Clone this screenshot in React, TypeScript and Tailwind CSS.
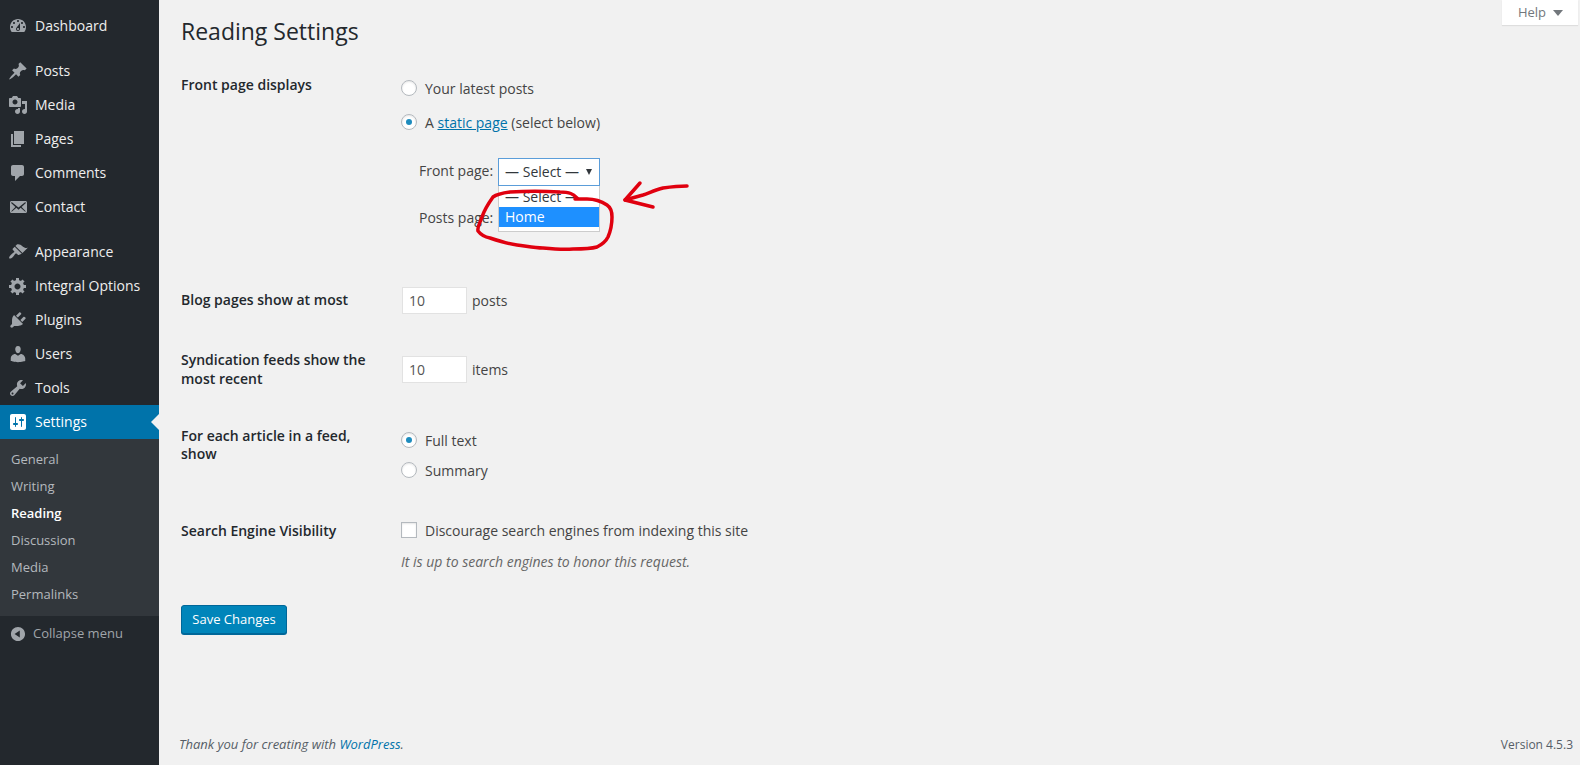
import type { ReactNode } from 'react';

const icons: Record<string, string> = {
  dashboard:
    'M3.76 16h12.48c1.1-1.37 1.76-3.11 1.76-5 0-4.42-3.58-8-8-8s-8 3.58-8 8c0 1.89.66 3.63 1.76 5zM10 4c.55 0 1 .45 1 1s-.45 1-1 1-1-.45-1-1 .45-1 1-1zM6 6c.55 0 1 .45 1 1s-.45 1-1 1-1-.45-1-1 .45-1 1-1zm8 0c.55 0 1 .45 1 1s-.45 1-1 1-1-.45-1-1 .45-1 1-1zm-5.37 5.55L12 7v6c0 1.1-.9 2-2 2s-2-.9-2-2c0-.57.24-1.08.63-1.45zM4 10c.55 0 1 .45 1 1s-.45 1-1 1-1-.45-1-1 .45-1 1-1zm12 0c.55 0 1 .45 1 1s-.45 1-1 1-1-.45-1-1 .45-1 1-1zm-5 3c0-.55-.45-1-1-1s-1 .45-1 1 .45 1 1 1 1-.45 1-1z',
  posts:
    'M10.44 3.02l1.82-1.82 6.36 6.35-1.83 1.82c-1.05-.68-2.48-.57-3.41.36l-.75.75c-.92.93-1.04 2.35-.35 3.41l-1.83 1.82-2.41-2.41-2.8 2.79c-.42.42-3.38 2.71-3.8 2.29s1.86-3.39 2.28-3.81l2.79-2.79L4.1 9.36l1.83-1.82c1.05.69 2.48.57 3.41-.36l.75-.75c.93-.92 1.04-2.35.35-3.41z',
  media:
    'M13 11V4c0-.55-.45-1-1-1h-1.67L9 1H5L3.67 3H2c-.55 0-1 .45-1 1v7c0 .55.45 1 1 1h10c.55 0 1-.45 1-1zM7 4.5c1.38 0 2.5 1.12 2.5 2.5S8.38 9.5 7 9.5 4.5 8.38 4.5 7 5.62 4.5 7 4.5zM14 6h5v10.5c0 1.38-1.12 2.5-2.5 2.5S14 17.88 14 16.5s1.12-2.5 2.5-2.5c.17 0 .34.02.5.05V9h-3V6zm-4 8.05V13h2v3.5c0 1.38-1.12 2.5-2.5 2.5S7 17.88 7 16.5 8.12 14 9.5 14c.17 0 .34.02.5.05z',
  pages: 'M6 15V2h10v13H6zm-1 1h8v2H3V5h2v11z',
  comments: 'M5 2h9c1.1 0 2 .9 2 2v7c0 1.1-.9 2-2 2h-2l-5 5v-5H5c-1.1 0-2-.9-2-2V4c0-1.1.9-2 2-2z',
  contact:
    'M19 14.5v-9c0-.83-.67-1.5-1.5-1.5H3.49c-.83 0-1.5.67-1.5 1.5v9c0 .83.67 1.5 1.5 1.5H17.5c.83 0 1.5-.67 1.5-1.5zm-1.31-9.11c.33.33.15.67-.03.84L13.6 9.95l3.9 4.06c.12.14.2.36.06.51-.13.16-.43.15-.56.05l-4.37-3.73-2.14 1.95-2.13-1.95-4.37 3.73c-.13.1-.43.11-.56-.05-.14-.15-.06-.37.06-.51l3.9-4.06-4.06-3.72c-.18-.17-.36-.51-.03-.84s.67-.17.95.07l6.24 5.04 6.25-5.04c.28-.24.62-.4.95-.07z',
  appearance:
    'M14.48 11.06L7.41 3.99l1.5-1.5c.5-.56 2.3-.47 3.51.32 1.21.8 1.43 1.28 2.91 2.1 1.18.64 2.45 1.26 4.45.85zm-.71.71L6.7 4.7 4.93 6.47c-.39.39-.39 1.02 0 1.41l1.06 1.06c.39.39.39 1.03 0 1.42-.6.6-1.43 1.11-2.21 1.69-.35.26-.7.53-1.01.84-1.38 1.38-2.02 2.9-1.42 3.5.6.6 2.12-.04 3.5-1.42.31-.31.58-.66.84-1.01.58-.78 1.09-1.61 1.69-2.21.39-.39 1.03-.39 1.42 0l1.06 1.06c.39.39 1.02.39 1.41 0z',
  gear:
    'M18 12h-2.18c-.17.7-.44 1.35-.81 1.93l1.54 1.54-2.1 2.1-1.54-1.54c-.58.36-1.23.63-1.91.79V19H8v-2.18c-.68-.16-1.33-.43-1.91-.79l-1.54 1.54-2.12-2.12 1.54-1.54c-.36-.58-.63-1.23-.79-1.91H1V9.03h2.17c.16-.7.44-1.35.8-1.94L2.43 5.55l2.1-2.1 1.54 1.54c.58-.37 1.24-.64 1.93-.81V2h3v2.18c.68.16 1.33.43 1.91.79l1.54-1.54 2.12 2.12-1.54 1.54c.36.59.64 1.24.8 1.94H18V12zm-8.5 1.5c1.66 0 3-1.34 3-3s-1.34-3-3-3-3 1.34-3 3 1.34 3 3 3z',
  plugins:
    'M13.11 4.36L9.87 7.6 8 5.73l3.24-3.24c.35-.34 1.05-.2 1.56.32.52.51.66 1.21.31 1.55zm-8 1.77l.91-1.12 9.01 9.01-1.19.84c-.71.71-2.63 1.16-3.82 1.16H6.14L4.9 17.26c-.59.59-1.54.59-2.12 0-.59-.58-.59-1.53 0-2.12l1.24-1.24v-3.88c0-1.13.4-3.19 1.09-3.89zm7.26 3.97l3.24-3.24c.34-.35 1.04-.21 1.55.31.52.51.66 1.21.31 1.55l-3.24 3.25z',
  users:
    'M10 9.25c-2.27 0-2.73-3.44-2.73-3.44C7 4.02 7.82 2 9.97 2c2.16 0 2.98 2.02 2.71 3.81 0 0-.41 3.44-2.68 3.44zm0 2.57L12.72 10c2.39 0 4.52 2.33 4.52 4.53v2.49s-3.65 1.13-7.24 1.13c-3.65 0-7.24-1.13-7.24-1.13v-2.49c0-2.25 1.94-4.48 4.47-4.48z',
  tools:
    'M16.68 9.77c-1.34 1.34-3.3 1.67-4.95.99l-5.41 6.52c-.99.99-2.59.99-3.58 0s-.99-2.59 0-3.57l6.52-5.42c-.68-1.65-.35-3.61.99-4.95 1.28-1.28 3.12-1.62 4.72-1.06l-2.89 2.89 2.82 2.82 2.86-2.87c.53 1.58.18 3.39-1.08 4.65zM3.81 16.21c.4.39 1.04.39 1.43 0 .4-.4.4-1.04 0-1.43-.39-.4-1.03-.4-1.43 0-.39.39-.39 1.03 0 1.43z',
  settings:
    'M18 16V4c0-1.1-.9-2-2-2H4c-1.1 0-2 .9-2 2v12c0 1.1.9 2 2 2h12c1.1 0 2-.9 2-2zM8 11h1c.55 0 1 .45 1 1s-.45 1-1 1H8v1.5c0 .28-.22.5-.5.5s-.5-.22-.5-.5V13H6c-.55 0-1-.45-1-1s.45-1 1-1h1V5.5c0-.28.22-.5.5-.5s.5.22.5.5V11zm5-2h-1c-.55 0-1-.45-1-1s.45-1 1-1h1V5.5c0-.28.22-.5.5-.5s.5.22.5.5V7h1c.55 0 1 .45 1 1s-.45 1-1 1h-1v5.5c0 .28-.22.5-.5.5s-.5-.22-.5-.5V9z',
  collapse:
    'M10 2.16c4.33 0 7.84 3.51 7.84 7.84s-3.51 7.84-7.84 7.84S2.16 14.33 2.16 10 5.71 2.16 10 2.16zm2 11.72V6.12L6.18 9.97z',
};

function Icon({ name, className }: { name: string; className: string }) {
  return (
    <svg viewBox="0 0 20 20" className={className} fill="currentColor">
      <path fillRule="evenodd" d={icons[name]} />
    </svg>
  );
}

function MenuItem({ icon, label, active }: { icon: string; label: string; active?: boolean }) {
  return (
    <div className={`relative flex h-[34px] items-center text-[14px] ${active ? 'bg-[#0073aa] text-white' : 'text-[#eee]'}`}>
      <div className="flex w-[35px] justify-center pl-[1px]">
        <Icon name={icon} className={`h-5 w-5 ${active ? 'text-white' : 'text-[#a0a5aa]'}`} />
      </div>
      <span className="pb-[2px]">{label}</span>
      {active && (
        <div className="absolute right-0 top-[9px] h-0 w-0 border-y-[8px] border-r-[8px] border-y-transparent border-r-[#f1f1f1]" />
      )}
    </div>
  );
}

function Sidebar() {
  return (
    <aside className="flex w-[159px] shrink-0 flex-col bg-[#23282d] pt-[9px]">
      <MenuItem icon="dashboard" label="Dashboard" />
      <div className="h-[11px]" />
      <MenuItem icon="posts" label="Posts" />
      <MenuItem icon="media" label="Media" />
      <MenuItem icon="pages" label="Pages" />
      <MenuItem icon="comments" label="Comments" />
      <MenuItem icon="contact" label="Contact" />
      <div className="h-[11px]" />
      <MenuItem icon="appearance" label="Appearance" />
      <MenuItem icon="gear" label="Integral Options" />
      <MenuItem icon="plugins" label="Plugins" />
      <MenuItem icon="users" label="Users" />
      <MenuItem icon="tools" label="Tools" />
      <MenuItem icon="settings" label="Settings" active />
      <div className="bg-[#32373c] pb-2 pl-[11px] pt-[7px] text-[13px] text-[#b4b9be]">
        {['General', 'Writing', 'Reading', 'Discussion', 'Media', 'Permalinks'].map((s) => (
          <div key={s} className={`flex h-[27px] items-center ${s === 'Reading' ? 'font-semibold text-white' : ''}`}>
            {s}
          </div>
        ))}
      </div>
      <div className="flex h-[36px] items-center pl-[9px] text-[13px] text-[#a0a5aa]">
        <Icon name="collapse" className="mr-[6px] h-[18px] w-[18px]" />
        Collapse menu
      </div>
    </aside>
  );
}

function Radio({ checked, children }: { checked?: boolean; children: ReactNode }) {
  return (
    <div className="flex h-[20px] items-center">
      <span className="mr-[8px] flex h-4 w-4 items-center justify-center rounded-full border border-[#b4b9be] bg-white shadow-[inset_0_1px_2px_rgba(0,0,0,0.1)]">
        {checked && <span className="h-[6px] w-[6px] rounded-full bg-[#1e8cbe]" />}
      </span>
      <span>{children}</span>
    </div>
  );
}

function NumberBox() {
  return (
    <div className="ml-px mr-[5px] flex h-[27px] w-[65px] items-center border border-[#e2e2e2] bg-white pl-[6px] text-[14px] text-[#555]">
      10
    </div>
  );
}

function Scribble() {
  return (
    <svg className="absolute left-0 top-0 z-20 h-[765px] w-[1580px]" viewBox="0 0 1580 765" fill="none" stroke="#e0000f" strokeWidth="3.5" strokeLinecap="round" strokeLinejoin="round">
      <path d="M577 198 C573 194 570 192 560 192 C545 191 525 191 510 192 C502 193 497 194 493 197 C488 204 484 211 482 217 C480 223 477 227 478 231 C481 235 485 237 490 238 C499 241 508 244 517 245 C526 246 534 248 543 248 C553 249 563 250 573 249 C582 249 590 249 597 247 C603 244 606 241 608 237 C611 230 612 223 612 217 C612 211 610 207 607 205 C601 201 594 199 587 199 L575 199" />
      <path d="M687 186 C678 186 670 187 663 188 C655 190 649 193 643 195 L625 200" />
      <path d="M640 183 L625 200 L653 207" />
    </svg>
  );
}

export default function App() {
  return (
    <div className="relative flex h-[765px] w-[1580px] overflow-hidden bg-[#f1f1f1] font-['Open_Sans',sans-serif] text-[14px] text-[#444]">
      <Sidebar />
      <main className="relative flex min-w-0 flex-1 flex-col pl-[22px] pr-[14px]">
        <div className="absolute right-[2px] top-0 flex h-[25px] w-[76px] items-center justify-center gap-[7px] bg-white pl-px text-[13px] text-[#72777c] shadow-[0_1px_1px_rgba(0,0,0,0.08)]">
          Help
          <span className="h-0 w-0 border-x-[5px] border-t-[6px] border-x-transparent border-t-[#72777c]" />
        </div>

        <h1 className="mt-[15px] h-[32px] text-[23px] leading-[32px] text-[#23282d]">Reading Settings</h1>

        <section className="mt-[28px] flex h-[174px]">
          <div className="-mt-px w-[220px] font-semibold text-[#23282d]">Front page displays</div>
          <div className="relative">
            <div className="mt-[3px]">
              <Radio>Your latest posts</Radio>
            </div>
            <div className="mt-[14px]">
              <Radio checked>
                A <span className="text-[#0073aa] underline">static page</span> (select below)
              </Radio>
            </div>
            <div className="relative ml-[18px] mt-[26px] flex items-center">
              <span className="mr-[5px] pb-[3px]">Front page:</span>
              <div className="flex h-[28px] w-[102px] items-center justify-between border border-[#5b9dd9] bg-white pb-px pl-[6px] pr-[7px] text-[#32373c]">
                — Select —
                <span className="h-0 w-0 border-x-[3.5px] border-t-[6px] border-x-transparent border-t-[#32373c]" />
              </div>
              <div className="absolute left-[79px] top-[28px] h-[46px] w-[102px] border-x border-b border-[#ccc] bg-white text-[#32373c]">
                <div className="flex h-[21px] items-center pl-[6px]">— Select —</div>
                <div className="flex h-[20px] items-center bg-[#1e90ff] pb-px pl-[6px] text-white">Home</div>
              </div>
            </div>
            <div className="ml-[18px] mt-[21px]">Posts page:</div>
          </div>
        </section>

        <section className="mt-[37px] flex h-[63px]">
          <div className="w-[220px] pt-[3px] font-semibold text-[#23282d]">Blog pages show at most</div>
          <div className="flex h-[28px] items-center">
            <NumberBox />
            posts
          </div>
        </section>

        <section className="flex h-[77px]">
          <div className="w-[220px] pt-[1px] font-semibold leading-[19px] text-[#23282d]">
            Syndication feeds show the
            <br />
            most recent
          </div>
          <div className="mt-[6px] flex h-[28px] items-center">
            <NumberBox />
            items
          </div>
        </section>

        <section className="flex h-[94px]">
          <div className="w-[220px] pt-[1px] font-semibold leading-[18px] text-[#23282d]">
            For each article in a feed,
            <br />
            show
          </div>
          <div>
            <div className="mt-[4px]">
              <Radio checked>Full text</Radio>
            </div>
            <div className="mt-[10px]">
              <Radio>Summary</Radio>
            </div>
          </div>
        </section>

        <section className="flex">
          <div className="w-[220px] font-semibold text-[#23282d]">Search Engine Visibility</div>
          <div>
            <div className="flex h-[20px] items-center">
              <span className="mr-[8px] h-4 w-4 border border-[#b4b9be] bg-white shadow-[inset_0_1px_2px_rgba(0,0,0,0.1)]" />
              Discourage search engines from indexing this site
            </div>
            <p className="mt-[11px] text-[14px] italic text-[#666]">It is up to search engines to honor this request.</p>
          </div>
        </section>

        <div className="mt-[33px]">
          <button className="h-[29px] w-[106px] rounded-[3px] border border-[#006799] bg-[#0085ba] text-[13px] text-white shadow-[0_1px_0_#006799]">
            Save Changes
          </button>
        </div>

        <footer className="mb-[11px] mt-auto flex items-end justify-between text-[13px] text-[#555d66]">
          <span className="-ml-[2px] italic">
            Thank you for creating with <span className="text-[#0073aa]">WordPress</span>.
          </span>
          <span className="-mr-[7px] text-[12px]">Version 4.5.3</span>
        </footer>
      </main>
      <Scribble />
    </div>
  );
}
